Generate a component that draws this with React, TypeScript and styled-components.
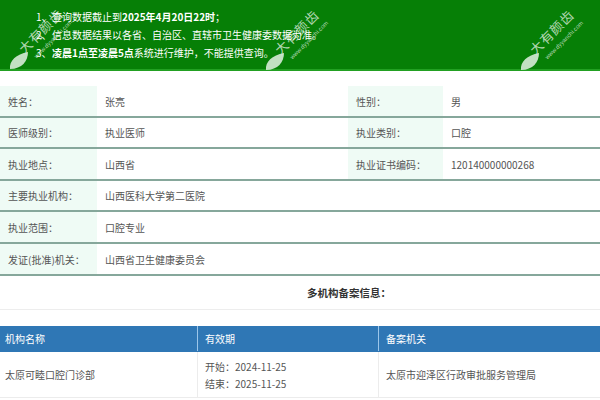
import React from "react";
import styled, { createGlobalStyle } from "styled-components";

const Global = createGlobalStyle`
  html, body { margin: 0; padding: 0; background: #fff; }
  body { font-family: "Noto Sans CJK SC", "Noto Sans", sans-serif; }
  * { box-sizing: border-box; }
`;

const Page = styled.div`
  position: relative;
  width: 600px;
  height: 400px;
  overflow: hidden;
  background: #fff;
`;

const Banner = styled.div`
  background: #067f06;
  border-bottom: 2px solid #22a022;
  height: 71px;
  padding: 8px 0 0 36px;
  color: #fff;
  font-size: 10px;
`;

const BannerLine = styled.div`
  display: flex;
  height: 18px;
  line-height: 18px;
  white-space: nowrap;
`;

const Num = styled.span`
  width: 16px;
`;

const Strong = styled.b`
  font-weight: 700;
`;

const InfoTable = styled.div`
  margin-top: 15px;
  display: flex;
  flex-direction: column;
`;

const Row = styled.div<{ $pair?: boolean; $h: number }>`
  display: grid;
  grid-template-columns: ${(p) => (p.$pair ? "97px 251px 95px 1fr" : "97px 1fr")};
  height: ${(p) => p.$h}px;
  border-bottom: 2px solid #86a79b;
  font-size: 10px;
  color: #555;
`;

const Label = styled.div`
  background: #effbf5;
  display: flex;
  align-items: center;
  padding-left: 8px;
`;

const Value = styled.div`
  display: flex;
  align-items: center;
  padding-left: 8px;
`;

const SectionTitle = styled.div`
  height: 34px;
  border-bottom: 1px solid #ededed;
  display: flex;
  align-items: center;
  padding-left: 307px;
  font-size: 10.5px;
  font-weight: 700;
  color: #333;
`;

const OrgTable = styled.div`
  margin-top: 16px;
  font-size: 10px;
`;

const OrgRow = styled.div<{ $head?: boolean }>`
  display: grid;
  grid-template-columns: 197px 181px 1fr;
  height: ${(p) => (p.$head ? "26px" : "46px")};
  background: ${(p) => (p.$head ? "#2f77b5" : "#fff")};
  color: ${(p) => (p.$head ? "#fff" : "#555")};
  border-bottom: 1px solid ${(p) => (p.$head ? "#2f77b5" : "#ececec")};
`;

const OrgCell = styled.div<{ $head?: boolean; $first?: boolean }>`
  display: flex;
  flex-direction: column;
  justify-content: center;
  padding-left: ${(p) => (p.$first ? "5px" : "7px")};
  border-left: ${(p) =>
    p.$first ? "none" : p.$head ? "1px solid #9cc6ea" : "1px solid #ececec"};
  line-height: 17px;
`;

const Mark = styled.div<{ $x: number; $y: number }>`
  position: absolute;
  left: ${(p) => p.$x}px;
  top: ${(p) => p.$y}px;
  width: 72px;
  height: 72px;
  pointer-events: none;
`;

const MarkText = styled.div`
  position: absolute;
  left: 8px;
  top: 46px;
  transform: rotate(-45deg);
  transform-origin: 0 0;
  font-size: 13px;
  line-height: 13px;
  color: rgba(255, 255, 255, 0.7);
  white-space: nowrap;
  letter-spacing: 1px;
`;

const MarkUrl = styled.div`
  position: absolute;
  left: 25px;
  top: 55px;
  transform: rotate(-45deg);
  transform-origin: 0 0;
  font-size: 6px;
  line-height: 6px;
  color: rgba(255, 255, 255, 0.65);
  white-space: nowrap;
  font-family: "Liberation Sans", sans-serif;
`;

const Leaf = styled.svg`
  position: absolute;
  left: 0;
  top: 51px;
`;

const Watermark = ({ x, y }: { x: number; y: number }) => (
  <Mark $x={x} $y={y}>
    <MarkText>大有颜齿</MarkText>
    <MarkUrl>www.dyyanchi.com</MarkUrl>
    <Leaf width="22" height="20" viewBox="0 0 22 20">
      <path d="M2 18 C1 10 8 3 20 1 C20 10 14 18 2 18 Z" fill="rgba(215,235,215,0.9)" />
    </Leaf>
  </Mark>
);

const rows: { pair?: boolean; h: number; cells: string[] }[] = [
  { pair: true, h: 32, cells: ["姓名：", "张亮", "性别：", "男"] },
  { pair: true, h: 31, cells: ["医师级别：", "执业医师", "执业类别：", "口腔"] },
  { pair: true, h: 32, cells: ["执业地点：", "山西省", "执业证书编码：", "120140000000268"] },
  { h: 31, cells: ["主要执业机构：", "山西医科大学第二医院"] },
  { h: 32, cells: ["执业范围：", "口腔专业"] },
  { h: 32, cells: ["发证(批准)机关：", "山西省卫生健康委员会"] },
];

export default function App() {
  return (
    <Page>
      <Global />
      <Banner>
        <BannerLine>
          <Num>1、</Num>
          <span>
            查询数据截止到<Strong>2025年4月20日22时</Strong>；
          </span>
        </BannerLine>
        <BannerLine>
          <Num>2、</Num>
          <span>信息数据结果以各省、自治区、直辖市卫生健康委数据为准。</span>
        </BannerLine>
        <BannerLine>
          <Num>3、</Num>
          <span>
            <Strong>凌晨1点至凌晨5点</Strong>系统进行维护，不能提供查询。
          </span>
        </BannerLine>
      </Banner>

      <InfoTable>
        {rows.map((r, i) => (
          <Row key={i} $pair={r.pair} $h={r.h}>
            {r.cells.map((c, j) =>
              j % 2 === 0 ? <Label key={j}>{c}</Label> : <Value key={j}>{c}</Value>
            )}
          </Row>
        ))}
      </InfoTable>

      <SectionTitle>多机构备案信息：</SectionTitle>

      <OrgTable>
        <OrgRow $head>
          <OrgCell $head $first>机构名称</OrgCell>
          <OrgCell $head>有效期</OrgCell>
          <OrgCell $head>备案机关</OrgCell>
        </OrgRow>
        <OrgRow>
          <OrgCell $first>太原可睦口腔门诊部</OrgCell>
          <OrgCell>
            <div>开始：2024-11-25</div>
            <div>结束：2025-11-25</div>
          </OrgCell>
          <OrgCell>太原市迎泽区行政审批服务管理局</OrgCell>
        </OrgRow>
      </OrgTable>

      <Watermark x={8} y={0} />
      <Watermark x={264} y={1} />
      <Watermark x={519} y={1} />
    </Page>
  );
}
